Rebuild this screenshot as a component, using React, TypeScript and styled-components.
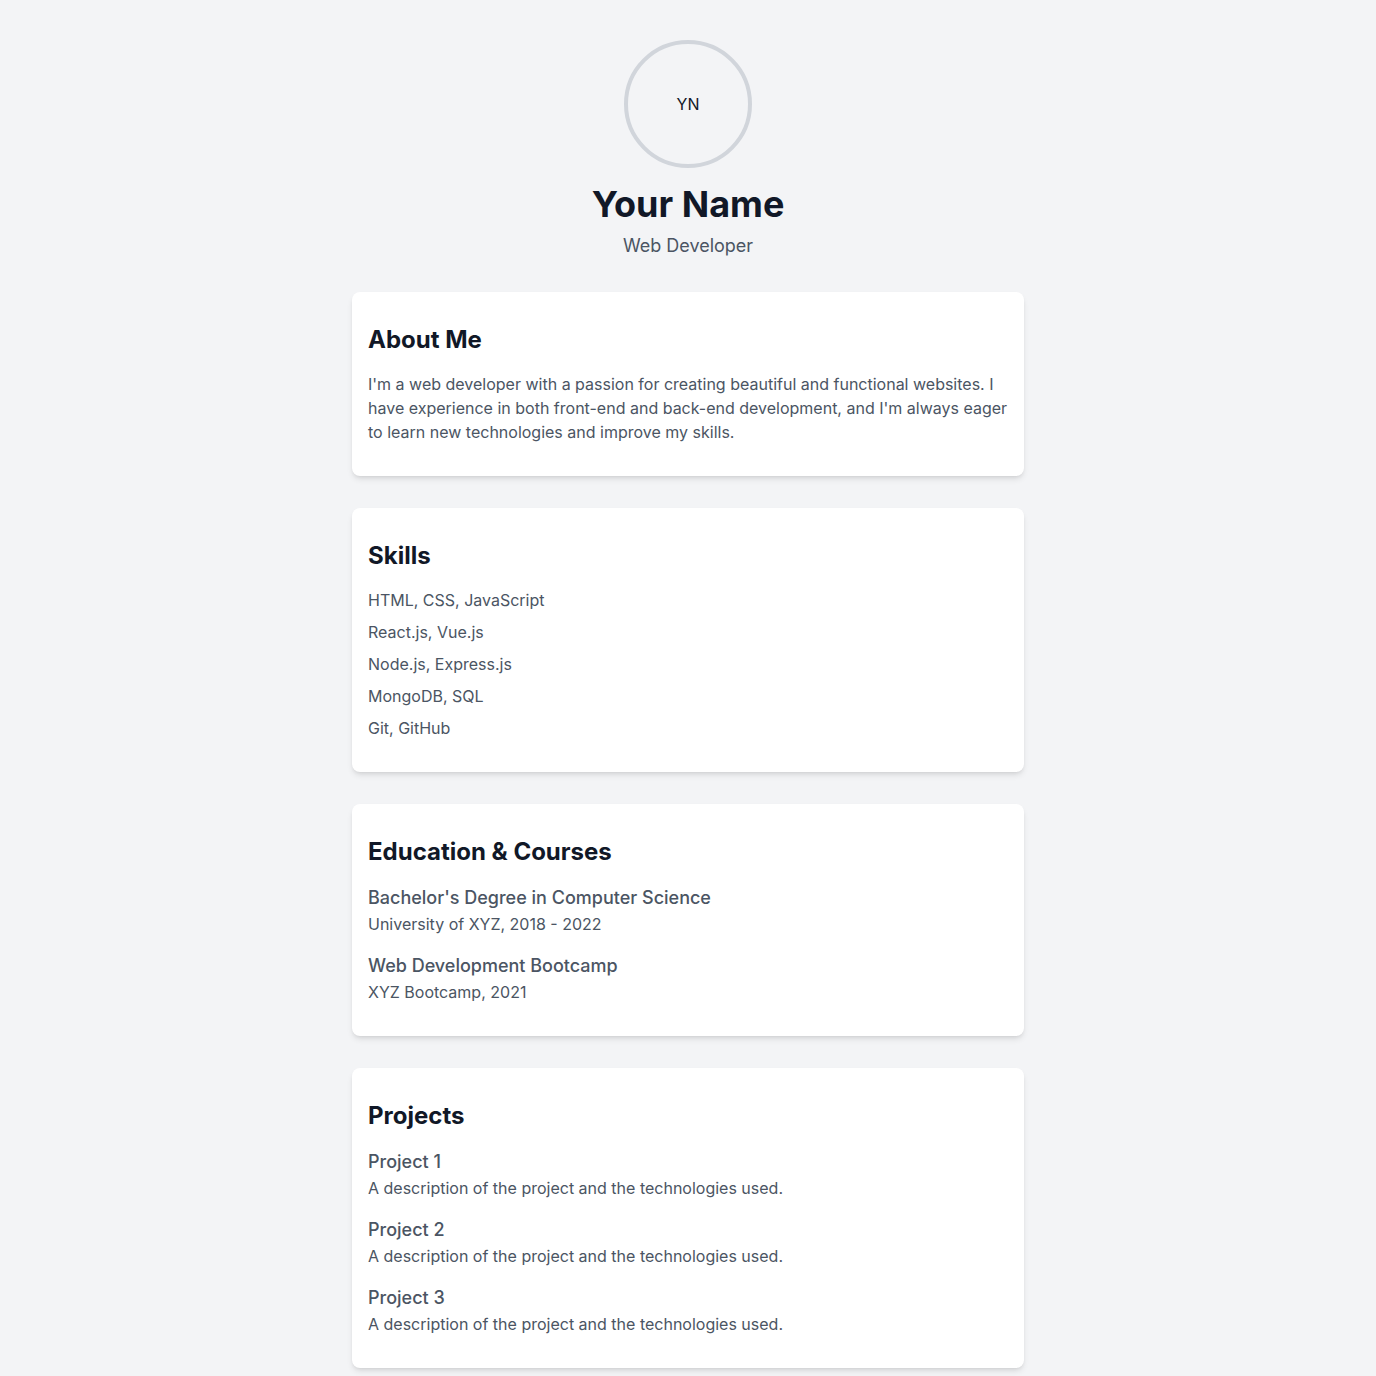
import React from 'react'
import styled, { createGlobalStyle } from 'styled-components'

const GlobalStyle = createGlobalStyle`
  * {
    box-sizing: border-box;
  }
  body {
    margin: 0;
    background: #f3f4f6;
    font-family: Inter, "Noto Sans", sans-serif;
    color: #111827;
  }
`

interface Entry {
  title: string,
  detail: string
}

const skills = [
  'HTML, CSS, JavaScript',
  'React.js, Vue.js',
  'Node.js, Express.js',
  'MongoDB, SQL',
  'Git, GitHub',
]

const education: Array<Entry> = [
  { title: "Bachelor's Degree in Computer Science", detail: 'University of XYZ, 2018 - 2022' },
  { title: 'Web Development Bootcamp', detail: 'XYZ Bootcamp, 2021' },
]

const projects: Array<Entry> = [1, 2, 3].map((n) => ({
  title: `Project ${n}`,
  detail: 'A description of the project and the technologies used.',
}))

interface SectionProps {
  title: string,
  children: React.ReactNode
}

const Section: React.FC<SectionProps> = ({ title, children }) => (
  <StyledCard>
    <StyledHeading>{title}</StyledHeading>
    {children}
  </StyledCard>
)

const EntryList: React.FC<{ entries: Array<Entry> }> = ({ entries }) => (
  <StyledEntries>
    {entries.map((entry) => (
      <div key={entry.title}>
        <StyledEntryTitle>{entry.title}</StyledEntryTitle>
        <StyledText>{entry.detail}</StyledText>
      </div>
    ))}
  </StyledEntries>
)

const App: React.FC = () => (
  <StyledPage>
    <GlobalStyle />
    <StyledHeader>
      <StyledAvatar>YN</StyledAvatar>
      <StyledName>Your Name</StyledName>
      <StyledRole>Web Developer</StyledRole>
    </StyledHeader>

    <Section title="About Me">
      <StyledText>
        I'm a web developer with a passion for creating beautiful and functional websites. I
        have experience in both front-end and back-end development, and I'm always eager
        to learn new technologies and improve my skills.
      </StyledText>
    </Section>

    <Section title="Skills">
      <StyledSkills>
        {skills.map((skill) => (
          <StyledText as="li" key={skill}>{skill}</StyledText>
        ))}
      </StyledSkills>
    </Section>

    <Section title="Education & Courses">
      <EntryList entries={education} />
    </Section>

    <Section title="Projects">
      <EntryList entries={projects} />
    </Section>
  </StyledPage>
)

const StyledPage = styled.main`
  width: 672px;
  margin: 0 auto;
  padding: 40px 0 8px;
  display: flex;
  flex-direction: column;
  gap: 32px;
`

const StyledHeader = styled.header`
  display: flex;
  flex-direction: column;
  align-items: center;
`

const StyledAvatar = styled.div`
  width: 128px;
  height: 128px;
  border-radius: 50%;
  border: 4px solid #d1d5db;
  display: flex;
  align-items: center;
  justify-content: center;
  font-size: 16px;
  color: #111827;
`

const StyledName = styled.h1`
  margin: 16px 0 0;
  font-size: 36px;
  line-height: 40px;
  font-weight: 700;
  color: #111827;
`

const StyledRole = styled.p`
  margin: 8px 0 0;
  font-size: 18px;
  line-height: 28px;
  color: #4b5563;
`

const StyledCard = styled.section`
  background: #ffffff;
  border-radius: 8px;
  box-shadow: 0 4px 6px -1px rgba(0, 0, 0, 0.1), 0 2px 4px -2px rgba(0, 0, 0, 0.1);
  padding: 32px 16px;
`

const StyledHeading = styled.h2`
  margin: 0 0 16px;
  font-size: 24px;
  line-height: 32px;
  font-weight: 700;
  color: #111827;
`

const StyledText = styled.p`
  margin: 0;
  font-size: 16px;
  line-height: 24px;
  color: #4b5563;
`

const StyledSkills = styled.ul`
  list-style: none;
  margin: 0;
  padding: 0;
  display: flex;
  flex-direction: column;
  gap: 8px;
`

const StyledEntries = styled.div`
  display: flex;
  flex-direction: column;
  gap: 16px;
`

const StyledEntryTitle = styled.h3`
  margin: 0;
  font-size: 18px;
  line-height: 28px;
  font-weight: 500;
  color: #4b5563;
`

export default App
